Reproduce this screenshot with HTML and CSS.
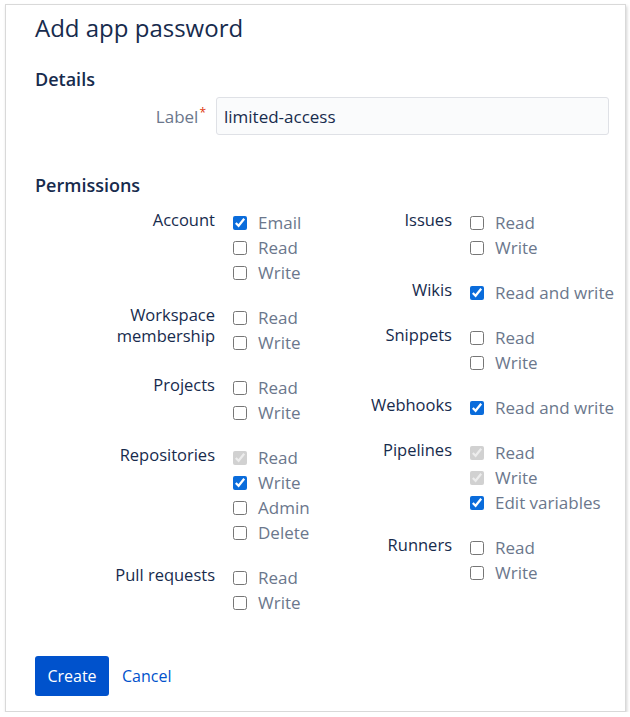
FILE: index.html
```html
<!DOCTYPE html>
<html>
<head>
<meta charset="utf-8">
<link rel="stylesheet" href="styles.css">
</head>
<body>
<div class="card">
  <h1 class="title">Add app password</h1>
  <h2 class="section">Details</h2>
  <div class="field">
    <label class="field-label" for="lbl">Label<span class="req">*</span></label>
    <input id="lbl" class="text-input" type="text" value="limited-access">
  </div>
  <h2 class="section section-perm">Permissions</h2>
  <div class="perms">
    <div class="perm-col">
      <div class="group">
        <div class="group-label">Account</div>
        <div class="opts">
          <label class="opt"><input type="checkbox" checked><span>Email</span></label>
          <label class="opt"><input type="checkbox"><span>Read</span></label>
          <label class="opt"><input type="checkbox"><span>Write</span></label>
        </div>
      </div>
      <div class="group">
        <div class="group-label">Workspace<br>membership</div>
        <div class="opts">
          <label class="opt"><input type="checkbox"><span>Read</span></label>
          <label class="opt"><input type="checkbox"><span>Write</span></label>
        </div>
      </div>
      <div class="group">
        <div class="group-label">Projects</div>
        <div class="opts">
          <label class="opt"><input type="checkbox"><span>Read</span></label>
          <label class="opt"><input type="checkbox"><span>Write</span></label>
        </div>
      </div>
      <div class="group">
        <div class="group-label">Repositories</div>
        <div class="opts">
          <label class="opt"><input type="checkbox" checked disabled><span>Read</span></label>
          <label class="opt"><input type="checkbox" checked><span>Write</span></label>
          <label class="opt"><input type="checkbox"><span>Admin</span></label>
          <label class="opt"><input type="checkbox"><span>Delete</span></label>
        </div>
      </div>
      <div class="group">
        <div class="group-label">Pull requests</div>
        <div class="opts">
          <label class="opt"><input type="checkbox"><span>Read</span></label>
          <label class="opt"><input type="checkbox"><span>Write</span></label>
        </div>
      </div>
    </div>
    <div class="perm-col">
      <div class="group">
        <div class="group-label">Issues</div>
        <div class="opts">
          <label class="opt"><input type="checkbox"><span>Read</span></label>
          <label class="opt"><input type="checkbox"><span>Write</span></label>
        </div>
      </div>
      <div class="group">
        <div class="group-label">Wikis</div>
        <div class="opts">
          <label class="opt"><input type="checkbox" checked><span>Read and write</span></label>
        </div>
      </div>
      <div class="group">
        <div class="group-label">Snippets</div>
        <div class="opts">
          <label class="opt"><input type="checkbox"><span>Read</span></label>
          <label class="opt"><input type="checkbox"><span>Write</span></label>
        </div>
      </div>
      <div class="group">
        <div class="group-label">Webhooks</div>
        <div class="opts">
          <label class="opt"><input type="checkbox" checked><span>Read and write</span></label>
        </div>
      </div>
      <div class="group">
        <div class="group-label">Pipelines</div>
        <div class="opts">
          <label class="opt"><input type="checkbox" checked disabled><span>Read</span></label>
          <label class="opt"><input type="checkbox" checked disabled><span>Write</span></label>
          <label class="opt"><input type="checkbox" checked><span>Edit variables</span></label>
        </div>
      </div>
      <div class="group">
        <div class="group-label">Runners</div>
        <div class="opts">
          <label class="opt"><input type="checkbox"><span>Read</span></label>
          <label class="opt"><input type="checkbox"><span>Write</span></label>
        </div>
      </div>
    </div>
  </div>
  <div class="actions">
    <button class="btn-primary" type="button">Create</button>
    <a class="btn-link" href="#">Cancel</a>
  </div>
</div>
</body>
</html>
```

FILE: styles.css
```css
html, body {
  margin: 0;
  padding: 0;
  background: #ffffff;
}
body {
  font-family: "Open Sans", "Noto Sans", "Liberation Sans", sans-serif;
  color: #172b4d;
}
.card {
  box-sizing: border-box;
  margin: 4px 0 0 5px;
  width: 621px;
  height: 708px;
  border: 1px solid #d9d9d9;
  box-shadow: 1px 2px 3px rgba(0, 0, 0, 0.18);
  padding: 8px 12px 0 29px;
  background: #fff;
}
.title {
  margin: 0;
  font-size: 24px;
  line-height: 30px;
  font-weight: 500;
  color: #172b4d;
}
.section {
  margin: 24px 0 0 0;
  font-size: 18px;
  line-height: 24px;
  font-weight: 600;
  color: #172b4d;
}
.section-perm {
  margin-top: 38px;
}
.field {
  display: flex;
  align-items: center;
  margin-top: 6px;
}
.field-label {
  width: 171px;
  padding-right: 10px;
  text-align: right;
  font-size: 17px;
  color: #6b778c;
  font-weight: 500;
}
.req {
  color: #de350b;
  font-size: 12px;
  vertical-align: 6px;
  margin-left: 1px;
}
.text-input {
  box-sizing: border-box;
  width: 393px;
  height: 38px;
  border: 1px solid #dfe1e6;
  border-radius: 3px;
  background: #fafbfc;
  padding: 0 7px;
  font-family: inherit;
  font-size: 17px;
  color: #172b4d;
  outline: none;
}
.perms {
  display: grid;
  grid-template-columns: 237px 1fr;
  margin-top: 13px;
}
.perm-col {
  display: flex;
  flex-direction: column;
  gap: 20px;
}
.group {
  display: grid;
  grid-template-columns: 180px 1fr;
  column-gap: 18px;
}
.group-label {
  text-align: right;
  font-size: 16.5px;
  line-height: 21px;
  margin-top: -1px;
  color: #172b4d;
}
.opts {
  display: flex;
  flex-direction: column;
}
.opt {
  display: flex;
  align-items: center;
  height: 25px;
  font-size: 17px;
  color: #6b778c;
  white-space: nowrap;
}
.opt input {
  flex: none;
  margin: 0 11px 0 0;
  width: 14px;
  height: 14px;
  accent-color: #0a6cdb;
}
.opt span {
  line-height: 25px;
}
.actions {
  display: flex;
  align-items: center;
  margin-top: 41px;
}
.btn-primary {
  width: 74px;
  height: 40px;
  border: 0;
  border-radius: 3px;
  background: #0052cc;
  color: #fff;
  font-family: inherit;
  font-size: 16px;
  padding: 0;
}
.btn-link {
  margin-left: 13px;
  color: #0052cc;
  font-size: 16px;
  text-decoration: none;
}
```
